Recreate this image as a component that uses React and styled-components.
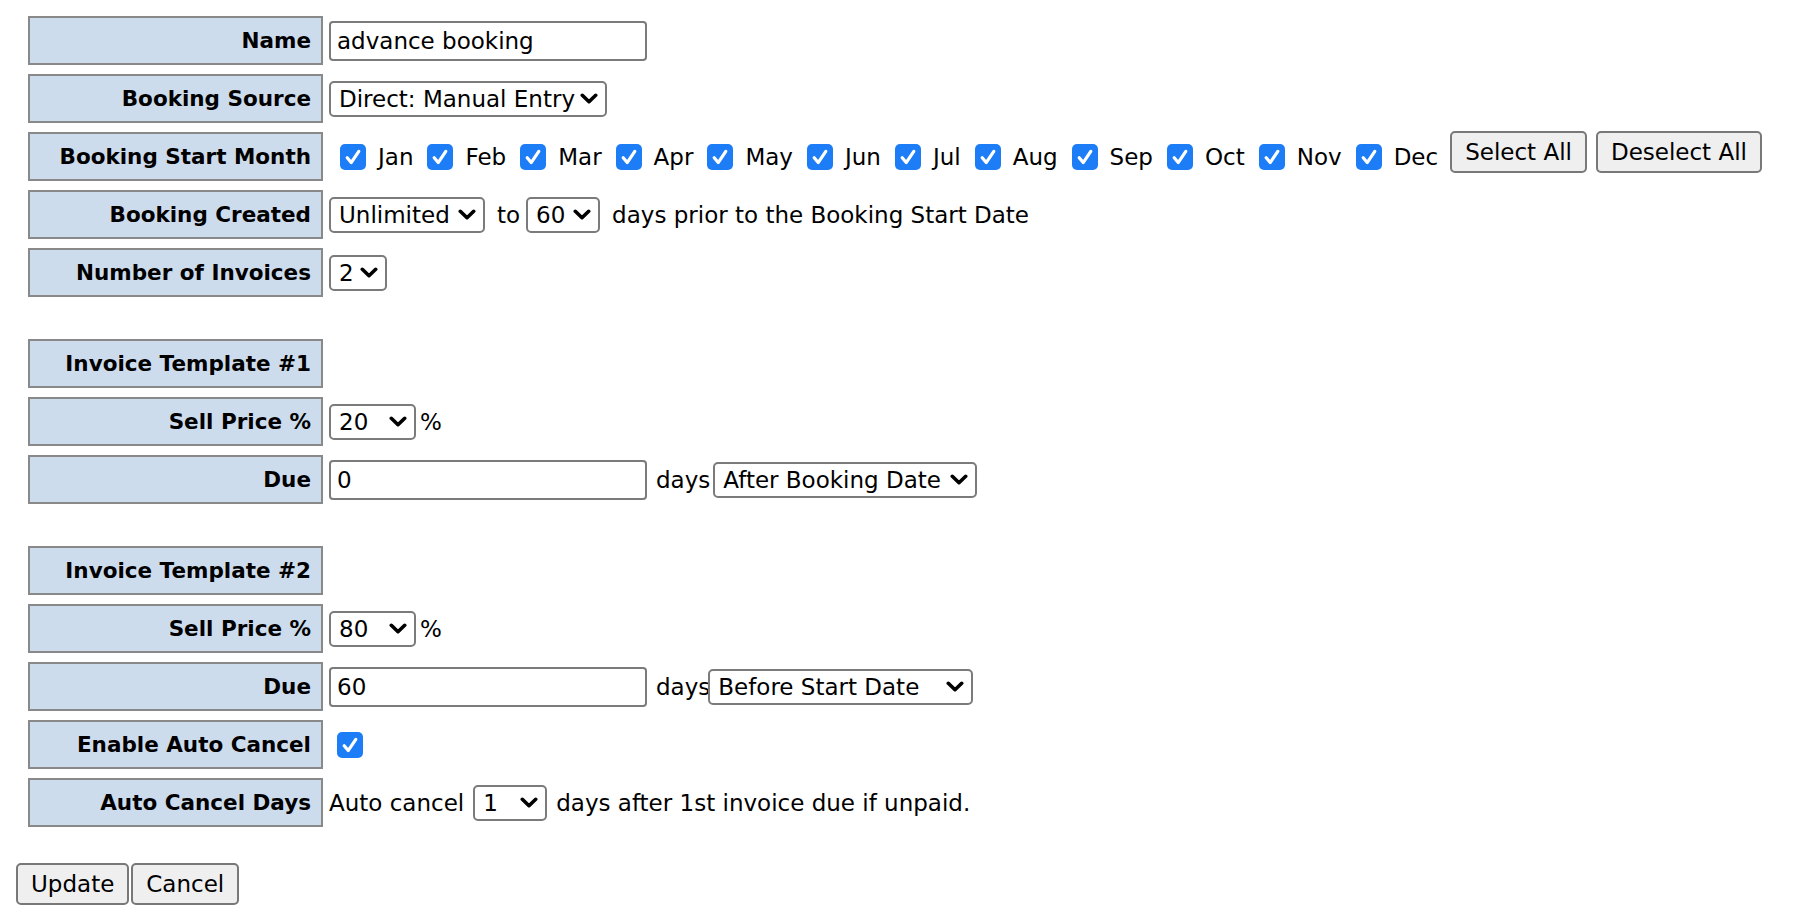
import React from "react";
import styled, { createGlobalStyle } from "styled-components";

const GlobalStyle = createGlobalStyle`
  html, body {
    margin: 0;
    padding: 0;
    background: #ffffff;
  }
  body {
    font-family: "DejaVu Sans", "Liberation Sans", sans-serif;
    color: #000;
  }
`;

const months = ["Jan", "Feb", "Mar", "Apr", "May", "Jun", "Jul", "Aug", "Sep", "Oct", "Nov", "Dec"];

function Chevron() {
    return (
        <svg width="18" height="11" viewBox="0 0 18 11">
            <path d="M2.3 2.3 L9 8.7 L15.7 2.3" fill="none" stroke="#000" strokeWidth="3.6" strokeLinecap="round" strokeLinejoin="round" />
        </svg>
    );
}

function Check({ $ml, $mr }) {
    return (
        <CheckBox $ml={$ml} $mr={$mr} role="checkbox" aria-checked="true">
            <svg width="26" height="26" viewBox="0 0 26 26">
                <path d="M7.2 13.8 L11.2 18.6 L18.8 7.4" fill="none" stroke="#fff" strokeWidth="3.2" strokeLinecap="round" strokeLinejoin="round" />
            </svg>
        </CheckBox>
    );
}

function Select({ value, width, $ml }) {
    return (
        <SelectBox $w={width} $ml={$ml}>
            <span>{value}</span>
            <Chevron />
        </SelectBox>
    );
}

export default function App() {
    return (
        <Page>
            <GlobalStyle />
            <Table>
                <Row>
                    <Label>Name</Label>
                    <Field><TextInput defaultValue="advance booking" /></Field>
                </Row>
                <Row>
                    <Label>Booking Source</Label>
                    <Field><Select value="Direct: Manual Entry" width={278} /></Field>
                </Row>
                <Row>
                    <Label>Booking Start Month</Label>
                    <Field>
                        {months.map((m) => (
                            <MonthItem key={m}>
                                <Check $ml={11} $mr={12} />
                                {m}
                            </MonthItem>
                        ))}
                        <Button $ml={9} $raise>Select All</Button>
                        <Button $ml={9} $raise>Deselect All</Button>
                    </Field>
                </Row>
                <Row>
                    <Label>Booking Created</Label>
                    <Field>
                        <Select value="Unlimited" width={156} />
                        <Plain $ml={12} $mr={6}>to</Plain>
                        <Select value="60" width={74} />
                        <Plain $ml={12}>days prior to the Booking Start Date</Plain>
                    </Field>
                </Row>
                <Row>
                    <Label>Number of Invoices</Label>
                    <Field><Select value="2" width={58} /></Field>
                </Row>

                <Row $spaced>
                    <Label>Invoice Template #1</Label>
                </Row>
                <Row>
                    <Label>Sell Price %</Label>
                    <Field>
                        <Select value="20" width={87} />
                        <Plain $ml={4}>%</Plain>
                    </Field>
                </Row>
                <Row>
                    <Label>Due</Label>
                    <Field>
                        <TextInput defaultValue="0" />
                        <Plain $ml={9} $mr={3}>days</Plain>
                        <Select value="After Booking Date" width={264} />
                    </Field>
                </Row>

                <Row $spaced>
                    <Label>Invoice Template #2</Label>
                </Row>
                <Row>
                    <Label>Sell Price %</Label>
                    <Field>
                        <Select value="80" width={87} />
                        <Plain $ml={4}>%</Plain>
                    </Field>
                </Row>
                <Row>
                    <Label>Due</Label>
                    <Field>
                        <TextInput defaultValue="60" />
                        <Plain $ml={9} $mr={-2}>days</Plain>
                        <Select value="Before Start Date" width={265} />
                    </Field>
                </Row>
                <Row>
                    <Label>Enable Auto Cancel</Label>
                    <Field><Check $ml={8} $mr={0} /></Field>
                </Row>
                <Row>
                    <Label>Auto Cancel Days</Label>
                    <Field>
                        <Plain>Auto cancel</Plain>
                        <Select value="1" width={74} $ml={9} />
                        <Plain $ml={9}>days after 1st invoice due if unpaid.</Plain>
                    </Field>
                </Row>
            </Table>
            <Actions>
                <Button>Update</Button>
                <Button>Cancel</Button>
            </Actions>
        </Page>
    );
}

const Page = styled.div`
    padding: 16px 16px;
    font-size: 23px;
`
const Table = styled.div`
    display: flex;
    flex-direction: column;
    gap: 9px;
    padding-left: 12px;
`
const Row = styled.div`
    display: flex;
    align-items: center;
    gap: 6px;
    height: 49px;
    margin-top: ${(p) => (p.$spaced ? "33px" : "0")};
`
const Label = styled.div`
    box-sizing: border-box;
    flex: none;
    width: 295px;
    height: 49px;
    border: 2px solid #898989;
    background: #cddcec;
    display: flex;
    align-items: center;
    justify-content: flex-end;
    padding-right: 10px;
    font-weight: 700;
    font-size: 21.5px;
    white-space: nowrap;
`
const Field = styled.div`
    display: flex;
    align-items: center;
    white-space: nowrap;
`
const TextInput = styled.input`
    box-sizing: border-box;
    width: 318px;
    height: 40px;
    border: 2px solid #7b7b7b;
    border-radius: 4px;
    padding: 0 6px;
    font-family: "DejaVu Sans", sans-serif;
    font-size: 23px;
    color: #000;
    background: #fff;
    outline: none;
`
const SelectBox = styled.div`
    box-sizing: border-box;
    width: ${(p) => p.$w}px;
    height: 36px;
    margin-left: ${(p) => p.$ml || 0}px;
    border: 2px solid #7b7b7b;
    border-radius: 5px;
    background: #fff;
    display: flex;
    align-items: center;
    justify-content: space-between;
    padding: 0 7px 0 8px;
    font-size: 23px;
    white-space: nowrap;
    overflow: hidden;
    svg { flex: none; }
`
const Plain = styled.span`
    margin-left: ${(p) => p.$ml || 0}px;
    margin-right: ${(p) => p.$mr || 0}px;
`
const MonthItem = styled.span`
    display: inline-flex;
    align-items: center;
    margin-right: 3px;
`
const CheckBox = styled.span`
    flex: none;
    width: 26px;
    height: 26px;
    border-radius: 5px;
    background: #1d7df6;
    margin-left: ${(p) => p.$ml}px;
    margin-right: ${(p) => p.$mr}px;
    display: inline-flex;
    svg { display: block; }
`
const Button = styled.button`
    box-sizing: border-box;
    height: 42px;
    padding: 0 13px;
    margin-left: ${(p) => p.$ml || 0}px;
    margin-bottom: ${(p) => (p.$raise ? "10px" : "0")};
    border: 2px solid #787878;
    border-radius: 5px;
    background: #efefef;
    font-family: "DejaVu Sans", sans-serif;
    font-size: 23px;
    color: #000;
    white-space: nowrap;
`
const Actions = styled.div`
    display: flex;
    gap: 2px;
    margin-top: 36px;
`
